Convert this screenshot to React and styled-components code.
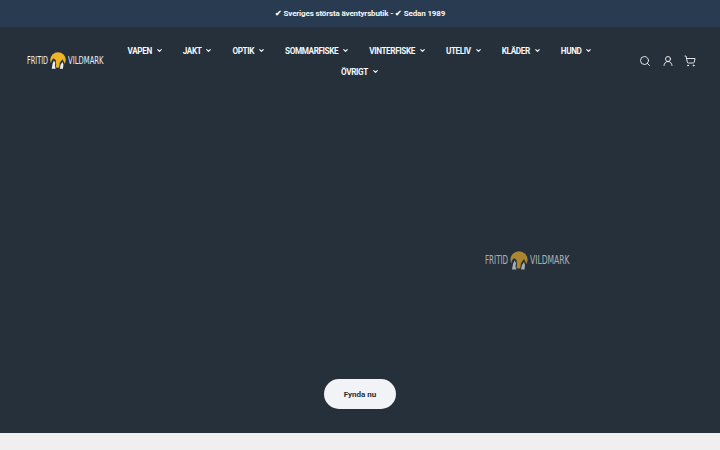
import React from "react";
import styled, { createGlobalStyle } from "styled-components";
import { Search, UserRound, ShoppingCart, ChevronDown } from "lucide-react";

const Global = createGlobalStyle`
  html, body { margin: 0; padding: 0; background: #efefef; }
  body { font-family: Roboto, "Liberation Sans", sans-serif; overflow: hidden; }
`;

const Page = styled.div`
  width: 720px;
  height: 450px;
  display: flex;
  flex-direction: column;
  overflow: hidden;
`;

const Announcement = styled.div`
  height: 27px;
  flex: none;
  display: flex;
  align-items: center;
  justify-content: center;
  background: #283b51;
  color: #f4f6f8;
  font-size: 8px;
  font-weight: 700;
  letter-spacing: -0.15px;
`;

const Dark = styled.div`
  height: 406px;
  flex: none;
  display: flex;
  flex-direction: column;
  background: #25303b;
  position: relative;
`;

const Header = styled.header`
  display: grid;
  grid-template-columns: 78px 470px 1fr;
  align-items: center;
  column-gap: 20px;
  padding: 13px 24px 0 27px;
  color: #f4f6f8;
`;

const Nav = styled.nav`
  display: flex;
  flex-wrap: wrap;
  justify-content: center;
  column-gap: 20px;
  row-gap: 0;
`;

const NavItem = styled.a`
  height: 21px;
  display: flex;
  align-items: center;
  gap: 4px;
  font-size: 8.2px;
  font-weight: 700;
  letter-spacing: -0.4px;
  white-space: nowrap;
`;

const Icons = styled.div`
  display: flex;
  justify-content: space-between;
  align-items: center;
  justify-self: end;
  width: 57px;
`;

const LogoWrap = styled.div`
  display: flex;
  align-items: center;
  gap: 1px;
  width: ${(p) => p.$w}px;
  opacity: ${(p) => p.$o};
  margin-top: ${(p) => p.$mt}px;
`;

const LogoText = styled.span`
  font-family: "DejaVu Sans", sans-serif;
  font-size: ${(p) => p.$fs}px;
  line-height: 1;
  color: #eef1f3;
  transform: scaleX(${(p) => p.$sx});
  transform-origin: left center;
  width: ${(p) => p.$w}px;
  flex: none;
  white-space: nowrap;
`;

const Badge = styled.svg`
  flex: none;
  display: block;
`;

const Hero = styled.div`
  flex: 1;
  display: flex;
  align-items: flex-end;
  justify-content: center;
  padding-bottom: 24px;
`;

const HeroLogo = styled.div`
  position: absolute;
  left: 485px;
  top: 224px;
`;

const Cta = styled.a`
  width: 72px;
  height: 30px;
  border-radius: 15px;
  background: #f1f3f6;
  color: #25303b;
  display: flex;
  align-items: center;
  justify-content: center;
  font-size: 8px;
  font-weight: 700;
`;

const Footer = styled.div`
  flex: 1;
  background: #efefef;
`;

function Logo({ w, o, fs, lw, rw, h, lsx, rsx, mt }) {
  return (
    <LogoWrap $w={w} $o={o} $mt={mt}>
      <LogoText $fs={fs} $w={lw} $sx={lsx}>FRITID</LogoText>
      <Badge width={h} height={h} viewBox="0 0 20 20">
        <circle cx="10" cy="8.8" r="8.6" fill="#f0b429" />
        <path d="M1.5 15 L3 9.5 L5 7 L7.5 9 L8 14 L7 19 L2 19.5 Z" fill="#25303b" />
        <path d="M3 18.5 L4 13 L5.5 9.5 L7 12 L6.5 16 L7.5 18.5 Z" fill="#eef1f3" />
        <path d="M11 19 L12 12 L15 8 L18 14 L17.5 19 Z" fill="#25303b" />
        <path d="M12 18.5 L13 14 L15 11 L16 14 L15.5 18.5 Z" fill="#eef1f3" />
      </Badge>
      <LogoText $fs={fs} $w={rw} $sx={rsx}>VILDMARK</LogoText>
    </LogoWrap>
  );
}

const items = ["VAPEN", "JAKT", "OPTIK", "SOMMARFISKE", "VINTERFISKE", "UTELIV", "KLÄDER", "HUND", "ÖVRIGT"];

export default function App() {
  return (
    <Page>
      <Global />
      <Announcement>✔ Sveriges största äventyrsbutik - ✔ Sedan 1989</Announcement>
      <Dark>
        <Header>
          <Logo w={78} o={1} fs={10.5} lw={21} rw={38} h={18} lsx={0.62} rsx={0.65} mt={-1} />
          <Nav>
            {items.map((t) => (
              <NavItem key={t}>
                {t}
                <ChevronDown size={7} strokeWidth={4} />
              </NavItem>
            ))}
          </Nav>
          <Icons>
            <Search size={12} strokeWidth={1.8} />
            <UserRound size={12} strokeWidth={1.8} />
            <ShoppingCart size={12} strokeWidth={1.8} />
          </Icons>
        </Header>
        <Hero>
          <Cta>Fynda nu</Cta>
        </Hero>
        <HeroLogo>
          <Logo w={87} o={0.65} fs={11.5} lw={23} rw={43} h={20} lsx={0.62} rsx={0.66} mt={0} />
        </HeroLogo>
      </Dark>
      <Footer />
    </Page>
  );
}
